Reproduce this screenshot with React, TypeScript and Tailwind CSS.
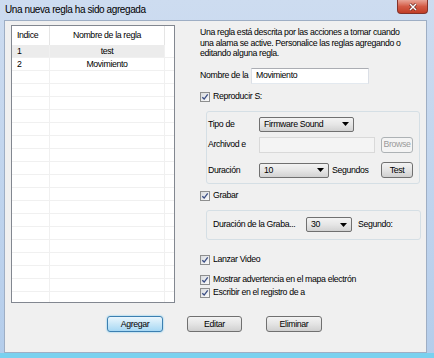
import React from "react";

const font = "font-['Liberation_Sans',Arial,sans-serif]";

const rules = [
  { idx: "1", name: "test", selected: true },
  { idx: "2", name: "Movimiento", selected: false },
];

function Check({ label }: { label: string }) {
  return (
    <div className="flex h-[12px] items-center">
      <span className="flex h-[10px] w-[10px] shrink-0 items-center justify-center border border-[#8e8f8f] bg-linear-to-br from-[#d9dbde] to-[#fbfbfb]">
        <svg viewBox="0 0 10 10" className="h-[8px] w-[8px]">
          <path d="M1.6 5.2 L4 7.6 L8.4 1.8" stroke="#3c4f85" strokeWidth="1.7" fill="none" />
        </svg>
      </span>
      <span className="ml-[3px]">{label}</span>
    </div>
  );
}

function Combo({ value, className }: { value: string; className: string }) {
  return (
    <div
      className={
        "flex h-[15px] items-center justify-between rounded-[2px] border border-[#707070] bg-linear-to-b from-[#f3f3f3] via-[#e6e6e6] to-[#d2d2d2] pl-[4px] pr-[4px] " +
        className
      }
    >
      <span>{value}</span>
      <svg viewBox="0 0 7 4" className="h-[4px] w-[7px]">
        <path d="M0 0 H7 L3.5 4 Z" fill="#000" />
      </svg>
    </div>
  );
}

function Btn({ label, className, primary, disabled }: { label: string; className: string; primary?: boolean; disabled?: boolean }) {
  let look = "border-[#707070] bg-linear-to-b from-[#f3f3f3] via-[#e4e4e4] to-[#d0d0d0] text-black";
  if (primary) look = "border-[#3c7fb1] bg-linear-to-b from-[#eaf6fd] via-[#c9e7f8] to-[#a7d8f4] text-black shadow-[0_0_2px_#5ec3f0]";
  if (disabled) look = "border-[#adb2b5] bg-[#f4f4f4] text-[#9a9a9a]";
  return (
    <div className={"flex h-[16px] items-center justify-center rounded-[3px] border " + look + " " + className}>
      {label}
    </div>
  );
}

function RuleList() {
  const filler = Array.from({ length: 18 });
  return (
    <div className="h-[278px] w-[164px] overflow-hidden border border-[#828790] bg-white">
      <div className="flex h-[19px] items-center">
        <div className="flex h-full w-[38px] items-center border-r border-[#e5e5e5] pl-[5px]">Indice</div>
        <div className="flex h-full w-[115px] items-center justify-center border-r border-[#e5e5e5]">Nombre de la regla</div>
        <div className="flex-1" />
      </div>
      {rules.map((r) => (
        <div key={r.idx} className="flex h-[13px] items-center border-b border-[#f0f0f0]">
          <div className={"flex h-full w-[153px] items-center " + (r.selected ? "bg-[#ececec]" : "")}>
            <div className="flex h-full w-[38px] items-center border-r border-[#f0f0f0] pl-[5px]">{r.idx}</div>
            <div className="flex h-full w-[115px] items-center justify-center border-r border-[#f0f0f0]">{r.name}</div>
          </div>
        </div>
      ))}
      {filler.map((_, i) => (
        <div key={i} className="flex h-[13px] border-b border-[#f0f0f0]">
          <div className="h-full w-[38px] border-r border-[#f0f0f0]" />
          <div className="h-full w-[115px] border-r border-[#f0f0f0]" />
        </div>
      ))}
    </div>
  );
}

export default function App() {
  return (
    <div className={"flex h-[358px] w-[434px] flex-col whitespace-nowrap bg-linear-to-b from-[#cddcf0] to-[#b4cdeb] text-[8.75px] leading-none tracking-[-0.35px] text-black " + font}>
      <div className="flex h-[20px] items-start">
        <span className="mt-[5px] pl-[5px] text-[10px] tracking-[-0.4px]">Una nueva regla ha sido agregada</span>
        <div className="ml-auto mr-[6px] flex h-[14px] w-[31px] items-center justify-center rounded-b-[4px] border border-t-0 border-[#83322a] bg-linear-to-b from-[#e8a497] via-[#d35a45] to-[#c13d26]">
          <svg viewBox="0 0 10 8" className="h-[8px] w-[10px]">
            <path d="M2 1 L8 7 M8 1 L2 7" stroke="#5a1a14" strokeWidth="2.6" />
            <path d="M2 1 L8 7 M8 1 L2 7" stroke="#fff" strokeWidth="1.5" />
          </svg>
        </div>
      </div>

      <div className="ml-[4px] flex h-[333px] w-[423px] flex-col border border-[#9eaec4] bg-[#f0f0f0]">
        <div className="flex pl-[6px] pt-[4px]">
          <RuleList />

          <div className="ml-[25px] flex w-[222px] flex-col">
            <p className="mt-[2px] w-[212px] whitespace-normal leading-[10.5px]">
              Una regla está descrita por las acciones a tomar cuando una alama se active. Personalice las reglas agregando o editando alguna regla.
            </p>

            <div className="mt-[9px] flex h-[16px] items-center">
              <span className="w-[51px]">Nombre de la</span>
              <div className="flex h-[16px] w-[118px] items-center border border-[#abadb3] border-x-[#dbdfe6] border-b-[#e3e9ef] bg-white pl-[4px]">
                Movimiento
              </div>
            </div>

            <div className="mt-[7px]">
              <Check label="Reproducir S:" />
            </div>

            <div className="ml-[6px] mt-[8px] flex h-[73px] w-[214px] flex-col rounded-[3px] border border-[#d5dfe5] pl-[1px] pr-[6px] pt-[5px]">
              <div className="flex h-[15px] items-center">
                <span className="w-[51px]">Tipo de</span>
                <Combo value="Firmware Sound" className="w-[95px]" />
              </div>
              <div className="mt-[5px] flex h-[16px] items-center">
                <span className="w-[51px]">Archivod e</span>
                <div className="h-[16px] w-[116px] border border-[#d9d9d9] bg-[#f4f4f4]" />
                <Btn label="Browse" disabled className="ml-auto w-[32px]" />
              </div>
              <div className="mt-[10px] flex h-[15px] items-center">
                <span className="w-[51px]">Duración</span>
                <Combo value="10" className="w-[70px]" />
                <span className="ml-[3px]">Segundos</span>
                <Btn label="Test" className="ml-auto w-[32px]" />
              </div>
            </div>

            <div className="mt-[6px]">
              <Check label="Grabar" />
            </div>

            <div className="ml-[6px] mt-[8px] flex h-[30px] w-[215px] items-center rounded-[3px] border border-[#d5dfe5] pl-[6px]">
              <span className="w-[93px]">Duración de la Graba...</span>
              <Combo value="30" className="w-[46px]" />
              <span className="ml-[6px]">Segundo:</span>
            </div>

            <div className="mt-[14px]">
              <Check label="Lanzar Video" />
            </div>
            <div className="mt-[8px]">
              <Check label="Mostrar advertencia en el mapa electrón" />
            </div>
            <div className="mt-[1px]">
              <Check label="Escribir en el registro de a" />
            </div>
          </div>
        </div>

        <div className="mt-[13px] flex gap-[24px] pl-[102px]">
          <Btn label="Agregar" primary className="w-[56px]" />
          <Btn label="Editar" className="w-[55px]" />
          <Btn label="Eliminar" className="w-[56px]" />
        </div>
      </div>

      <div className="mt-auto h-[5px] bg-[#79d1ef]" />
    </div>
  );
}
